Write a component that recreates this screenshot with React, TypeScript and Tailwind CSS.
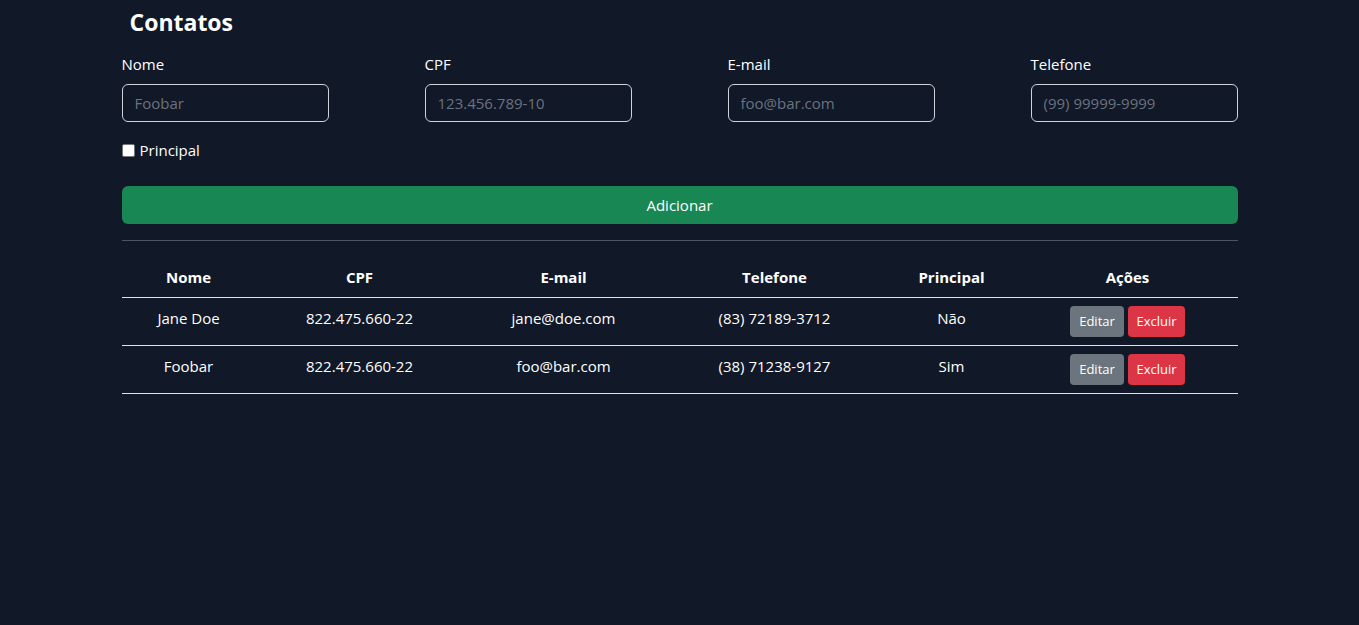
import React from "react";

const rows = [
  { nome: "Jane Doe", cpf: "822.475.660-22", email: "jane@doe.com", tel: "(83) 72189-3712", principal: "Não" },
  { nome: "Foobar", cpf: "822.475.660-22", email: "foo@bar.com", tel: "(38) 71238-9127", principal: "Sim" },
];

const fields = [
  { label: "Nome", ph: "Foobar" },
  { label: "CPF", ph: "123.456.789-10" },
  { label: "E-mail", ph: "foo@bar.com" },
  { label: "Telefone", ph: "(99) 99999-9999" },
];

export default function App() {
  return (
    <div
      className="min-h-[625px] w-full bg-[#111827] text-white"
      style={{ fontFamily: '"Segoe UI", "Open Sans", "Noto Sans", sans-serif' }}
    >
      <div className="mx-auto w-[1116px]">
        <h2 className="pl-2 pt-[6px] text-[23px] font-bold leading-[32px]">Contatos</h2>
        <div className="mt-[14px] grid grid-cols-[207px_207px_207px_207px] gap-x-[96px]">
          {fields.map((f) => (
            <div key={f.label} className="flex flex-col">
              <label className="mb-2 text-[15px] leading-[24px]">{f.label}</label>
              <input
                placeholder={f.ph}
                className="h-[38px] w-[207px] rounded-[6px] border border-[#ced4da] bg-transparent px-3 text-[15px] text-white outline-none placeholder:text-[#6b7280]"
              />
            </div>
          ))}
        </div>
        <label className="mt-4 flex h-6 items-center gap-[5px] text-[15px] leading-[24px]">
          <input type="checkbox" className="h-[13px] w-[13px] appearance-none rounded-[2px] border border-[#767676] bg-white" />
          Principal
        </label>
        <button className="mt-6 h-[38px] w-full rounded-[6px] bg-[#198754] text-[15px] text-white">
          Adicionar
        </button>
        <hr className="mt-4 border-t border-[#4b5563]" />
        <table className="mt-4 w-full table-fixed border-collapse text-[15px]">
          <colgroup>
            <col className="w-[134px]" />
            <col className="w-[208px]" />
            <col className="w-[200px]" />
            <col className="w-[222px]" />
            <col className="w-[132px]" />
            <col className="w-[220px]" />
          </colgroup>
          <thead>
            <tr className="border-b border-[#dee2e6]">
              {["Nome", "CPF", "E-mail", "Telefone", "Principal", "Ações"].map((h) => (
                <th key={h} className="px-2 py-2 text-center font-bold leading-[24px]">
                  {h}
                </th>
              ))}
            </tr>
          </thead>
          <tbody>
            {rows.map((r) => (
              <tr key={r.nome} className="border-b border-[#dee2e6]">
                <td className="px-2 py-2 text-center align-top leading-[24px]">{r.nome}</td>
                <td className="px-2 py-2 text-center align-top leading-[24px]">{r.cpf}</td>
                <td className="px-2 py-2 text-center align-top leading-[24px]">{r.email}</td>
                <td className="px-2 py-2 text-center align-top leading-[24px]">{r.tel}</td>
                <td className="px-2 py-2 text-center align-top leading-[24px]">{r.principal}</td>
                <td className="px-2 py-2 text-center align-top">
                  <div className="flex justify-center gap-1">
                    <button className="h-[31px] w-[54px] rounded-[4px] bg-[#6c757d] text-[13px] text-white">
                      Editar
                    </button>
                    <button className="h-[31px] w-[57px] rounded-[4px] bg-[#dc3545] text-[13px] text-white">
                      Excluir
                    </button>
                  </div>
                </td>
              </tr>
            ))}
          </tbody>
        </table>
      </div>
    </div>
  );
}
